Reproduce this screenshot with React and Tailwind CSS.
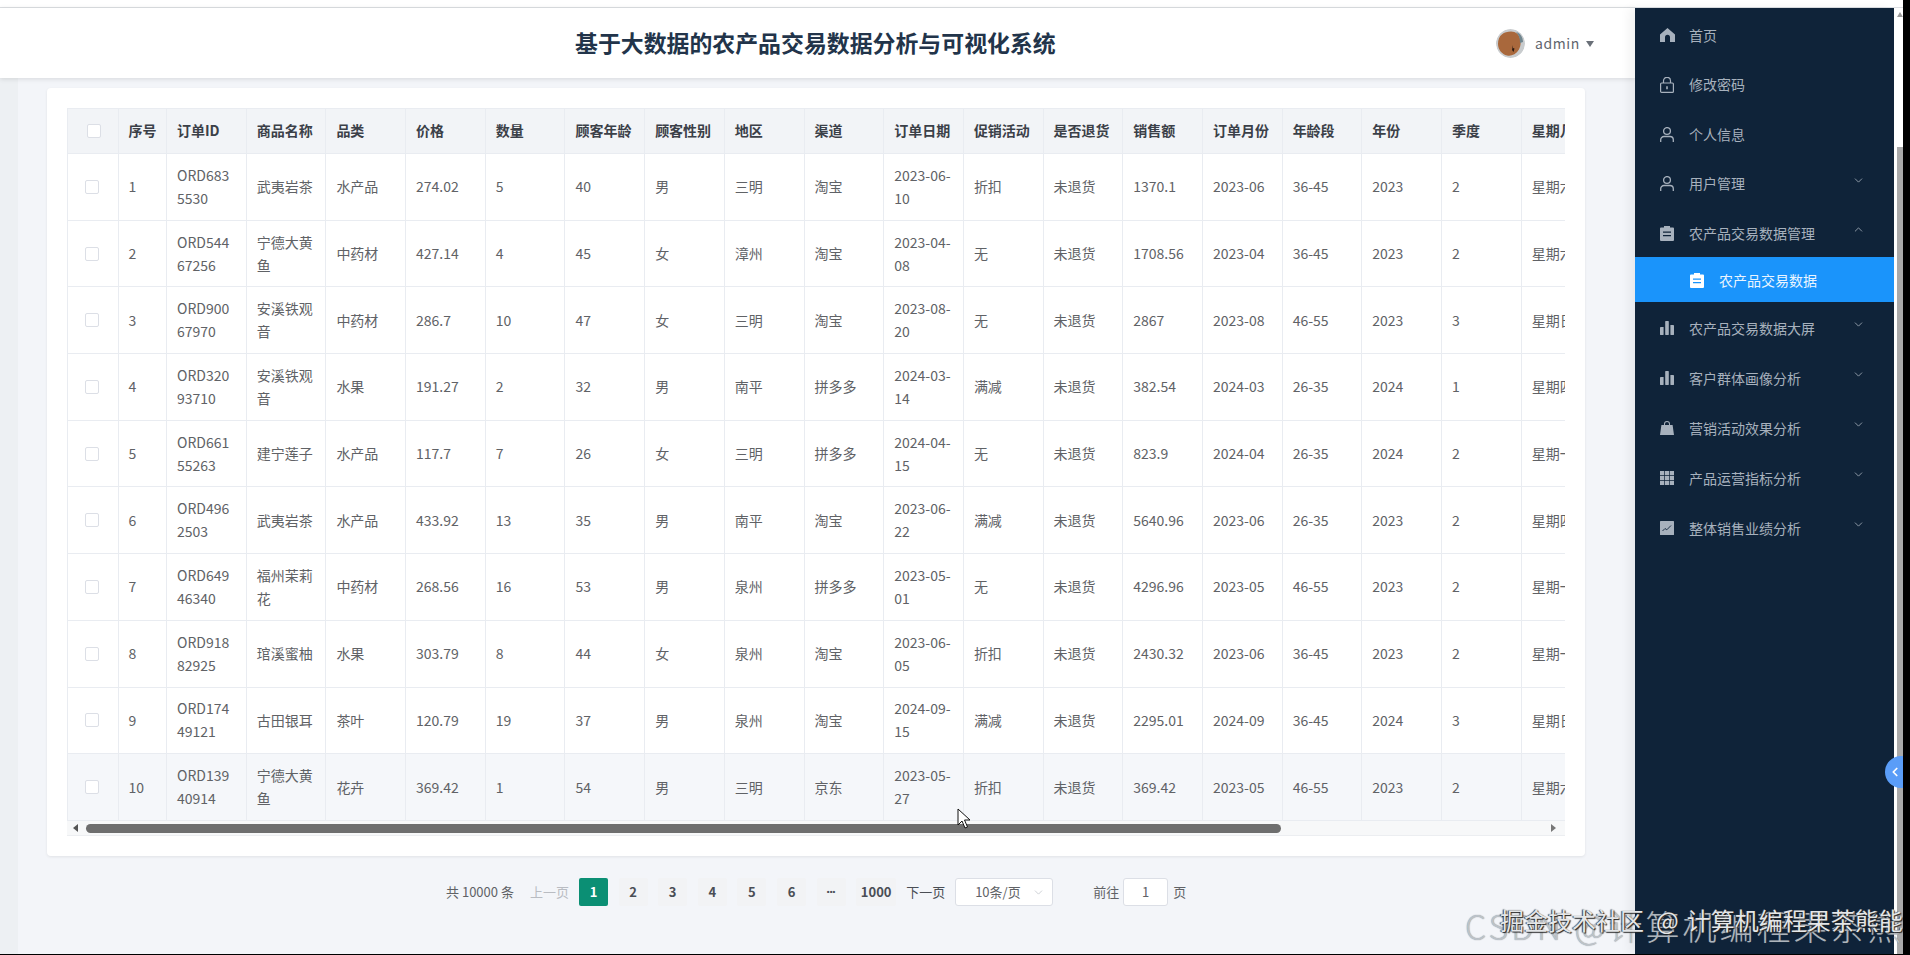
import React from 'react';
import { ChevronDown, ChevronUp, ChevronLeft } from 'lucide-react';

const columns = ['序号', '订单ID', '商品名称', '品类', '价格', '数量', '顾客年龄', '顾客性别', '地区', '渠道', '订单日期', '促销活动', '是否退货', '销售额', '订单月份', '年龄段', '年份', '季度', '星期几'];

const rows = [
  ['1', 'ORD6835530', '武夷岩茶', '水产品', '274.02', '5', '40', '男', '三明', '淘宝', '2023-06-10', '折扣', '未退货', '1370.1', '2023-06', '36-45', '2023', '2', '星期六'],
  ['2', 'ORD54467256', '宁德大黄鱼', '中药材', '427.14', '4', '45', '女', '漳州', '淘宝', '2023-04-08', '无', '未退货', '1708.56', '2023-04', '36-45', '2023', '2', '星期六'],
  ['3', 'ORD90067970', '安溪铁观音', '中药材', '286.7', '10', '47', '女', '三明', '淘宝', '2023-08-20', '无', '未退货', '2867', '2023-08', '46-55', '2023', '3', '星期日'],
  ['4', 'ORD32093710', '安溪铁观音', '水果', '191.27', '2', '32', '男', '南平', '拼多多', '2024-03-14', '满减', '未退货', '382.54', '2024-03', '26-35', '2024', '1', '星期四'],
  ['5', 'ORD66155263', '建宁莲子', '水产品', '117.7', '7', '26', '女', '三明', '拼多多', '2024-04-15', '无', '未退货', '823.9', '2024-04', '26-35', '2024', '2', '星期一'],
  ['6', 'ORD4962503', '武夷岩茶', '水产品', '433.92', '13', '35', '男', '南平', '淘宝', '2023-06-22', '满减', '未退货', '5640.96', '2023-06', '26-35', '2023', '2', '星期四'],
  ['7', 'ORD64946340', '福州茉莉花', '中药材', '268.56', '16', '53', '男', '泉州', '拼多多', '2023-05-01', '无', '未退货', '4296.96', '2023-05', '46-55', '2023', '2', '星期一'],
  ['8', 'ORD91882925', '琯溪蜜柚', '水果', '303.79', '8', '44', '女', '泉州', '淘宝', '2023-06-05', '折扣', '未退货', '2430.32', '2023-06', '36-45', '2023', '2', '星期一'],
  ['9', 'ORD17449121', '古田银耳', '茶叶', '120.79', '19', '37', '男', '泉州', '淘宝', '2024-09-15', '满减', '未退货', '2295.01', '2024-09', '36-45', '2024', '3', '星期日'],
  ['10', 'ORD13940914', '宁德大黄鱼', '花卉', '369.42', '1', '54', '男', '三明', '京东', '2023-05-27', '折扣', '未退货', '369.42', '2023-05', '46-55', '2023', '2', '星期六'],
];

const HomeIcon = () => (
  <svg width="15" height="14" viewBox="0 0 15 14" fill="currentColor">
    <path d="M7.5 0 15 6.6V14H10V9.2a2.5 2.5 0 0 0-5 0V14H0V6.6Z" />
  </svg>
);

const LockIcon = () => (
  <svg width="14" height="16" viewBox="0 0 14 16" fill="none" stroke="currentColor" strokeWidth="1.2">
    <rect x="0.6" y="6" width="12.8" height="9.4" rx="1" />
    <path d="M3.5 6V3.8a3.5 3.5 0 0 1 7 0V6" />
    <path d="M7 9.2v3" strokeWidth="1.6" />
  </svg>
);

const UserIcon = () => (
  <svg width="14" height="15" viewBox="0 0 14 15" fill="none" stroke="currentColor" strokeWidth="1.3">
    <circle cx="7" cy="4" r="3.4" />
    <path d="M0.7 15v-2.2A3.3 3.3 0 0 1 4 9.5h6a3.3 3.3 0 0 1 3.3 3.3V15" />
  </svg>
);

const ClipIcon = () => (
  <svg width="14" height="15" viewBox="0 0 14 15" fill="currentColor">
    <path fillRule="evenodd" d="M4 0h6v1.500h3a1 1 0 0 1 1 1V14a1 1 0 0 1-1 1H1a1 1 0 0 1-1-1V2.500a1 1 0 0 1 1-1h3Zm-1 5.500v1.200h8V5.500Zm0 3.600v1.200h8V9.100Z" />
  </svg>
);

const BarsIcon = () => (
  <svg width="14" height="14" viewBox="0 0 14 14" fill="currentColor">
    <rect x="0" y="6" width="3.6" height="8" rx="0.4" />
    <rect x="5.2" y="0" width="3.6" height="14" rx="0.4" />
    <rect x="10.4" y="4" width="3.6" height="10" rx="0.4" />
  </svg>
);

const BagIcon = () => (
  <svg width="14" height="14" viewBox="0 0 14 14" fill="currentColor">
    <path fillRule="evenodd" d="M4 4V3a3 3 0 0 1 6 0v1h2.600L14 14H0L1.400 4Zm1 0h4V3a2 2 0 0 0-4 0Z" />
  </svg>
);

const GridIcon = () => (
  <svg width="14" height="14" viewBox="0 0 14 14" fill="currentColor">
    <path d="M0 0h4.200v4.200H0ZM4.900 0h4.200v4.200H4.900ZM9.800 0H14v4.200H9.800ZM0 4.900h4.200v4.200H0ZM4.900 4.900h4.200v4.200H4.900ZM9.800 4.900H14v4.200H9.800ZM0 9.800h4.200V14H0ZM4.900 9.800h4.200V14H4.900ZM9.800 9.800H14V14H9.800Z" />
  </svg>
);

const TrendIcon = () => (
  <svg width="14" height="14" viewBox="0 0 14 14">
    <rect width="14" height="14" rx="0.6" fill="currentColor" />
    <path d="M2.500 10 5 7.500l1.800 1.300L11 4.500" fill="none" stroke="#0f2339" strokeWidth="0.9" />
  </svg>
);

const menuTop = [
  { label: '首页', icon: <HomeIcon /> },
  { label: '修改密码', icon: <LockIcon /> },
  { label: '个人信息', icon: <UserIcon /> },
  { label: '用户管理', icon: <UserIcon />, arrow: 'down' },
  { label: '农产品交易数据管理', icon: <ClipIcon />, arrow: 'up' },
];

const menuBottom = [
  { label: '农产品交易数据大屏', icon: <BarsIcon />, arrow: 'down' },
  { label: '客户群体画像分析', icon: <BarsIcon />, arrow: 'down' },
  { label: '营销活动效果分析', icon: <BagIcon />, arrow: 'down' },
  { label: '产品运营指标分析', icon: <GridIcon />, arrow: 'down' },
  { label: '整体销售业绩分析', icon: <TrendIcon />, arrow: 'down' },
];

function MenuItem({ item, tall }) {
  return (
    <div className={`flex items-center pl-[25px] pr-[29px] text-[14px] text-[#a7b1bd] ${tall ? 'h-[50px]' : 'h-[49.5px]'}`}>
      <span className="flex w-[29px] shrink-0 items-center">{item.icon}</span>
      <span>{item.label}</span>
      {item.arrow === 'down' && <ChevronDown size={13} strokeWidth={1.5} className="mb-[7px] ml-auto" />}
      {item.arrow === 'up' && <ChevronUp size={13} strokeWidth={1.5} className="mb-[7px] ml-auto" />}
    </div>
  );
}

function Sidebar() {
  return (
    <aside className="z-10 w-[259px] shrink-0 bg-[#0f2339] pt-[2.500px] shadow-[-6px_0_10px_rgba(0,0,0,0.05)]">
      {menuTop.map((item) => (
        <MenuItem key={item.label} item={item} />
      ))}
      <div className="relative -mt-[1px] mb-[1px] flex h-[45px] items-center bg-[#1a94fb] pl-[55px] pt-[1px] text-[14px] text-[#e9f4ff]">
        <span className="flex w-[29px] items-center text-white"><ClipIcon /></span>
        <span>农产品交易数据</span>
      </div>
      {menuBottom.map((item) => (
        <MenuItem key={item.label} item={item} tall />
      ))}
    </aside>
  );
}

function Header() {
  return (
    <header className="relative z-10 flex h-[70px] shrink-0 items-center bg-white shadow-[0_1px_5px_rgba(0,0,0,0.12)]">
      <h1 className="mb-[2px] ml-[575px] w-[490px] whitespace-nowrap text-[22.900px] font-bold text-[#22344a]">基于大数据的农产品交易数据分析与可视化系统</h1>
      <div className="ml-[431px] flex items-center">
        <svg width="29" height="29" viewBox="0 0 29 29" className="rounded-full">
          <circle cx="14.500" cy="14.500" r="14.500" fill="#c9ccce" />
          <path d="M2 15C2 6 8 2.500 15 2.500c5 0 8 3 9 7 1 3 1 7-1 11-3 5-8 7-12 6-5-1-9-6-9-11.500Z" fill="#a9683c" />
          <path d="M20 3c4 1 7 5 7 10l-3 1c0-5-1-8-4-11Z" fill="#70868f" />
          <path d="M17 16l-1 5 1.500 2 1-3.500-1.500-.500Z" fill="#2b1a12" />
        </svg>
        <span className="ml-[10px] text-[14px] tracking-[0.6px] text-[#5f656d]">admin</span>
        <span className="ml-[6px] mt-[1px] h-0 w-0 border-x-[4.500px] border-t-[6px] border-x-transparent border-t-[#6a7078]" />
      </div>
    </header>
  );
}

function CheckBox({ head }) {
  return <span className={`block h-[14px] w-[14px] rounded-[2px] border border-[#dcdfe6] bg-white ${head ? 'ml-[19px]' : 'ml-[17px]'}`} />;
}

function DataTable() {
  return (
    <div className="w-[1498px] overflow-hidden">
      <table className="w-[1533.600px] table-fixed border-collapse text-[14px] text-[#606266]">
        <colgroup>
          <col className="w-[50.500px]" />
          <col className="w-[48.500px]" />
          {columns.slice(1).map((c) => (
            <col key={c} className="w-[79.700px]" />
          ))}
        </colgroup>
        <thead>
          <tr className="h-[45px] bg-[#f2f4f7]">
            <th className="border border-[#e9ecf1] p-0"><CheckBox head /></th>
            {columns.map((c) => (
              <th key={c} className="overflow-hidden whitespace-nowrap border border-[#e9ecf1] px-[10px] pb-[2px] text-left font-bold text-[#3b4048]">{c}</th>
            ))}
          </tr>
        </thead>
        <tbody>
          {rows.map((row, i) => (
            <tr key={row[0]} className={`h-[66.700px] ${i === 9 ? 'bg-[#f5f7fa]' : 'bg-white'}`}>
              <td className="border border-[#e9ecf1] p-0"><CheckBox /></td>
              {row.map((cell, j) => (
                <td key={j} className="overflow-hidden border border-[#e9ecf1] px-[10px] leading-[23px] break-all">
                  <span className={j === 18 ? 'whitespace-nowrap' : ''}>{cell}</span>
                </td>
              ))}
            </tr>
          ))}
        </tbody>
      </table>
      <div className="flex h-[15px] items-center bg-[#f7f8f9] shadow-[inset_0_-1px_0_#eceef1]">
        <span className="ml-[6px] h-0 w-0 border-y-[4px] border-r-[5px] border-y-transparent border-r-[#555]" />
        <span className="ml-[8px] h-[9px] w-[1195px] rounded-full bg-[#6e6e6e]" />
        <span className="ml-[270px] h-0 w-0 border-y-[4px] border-l-[5px] border-y-transparent border-l-[#777]" />
      </div>
    </div>
  );
}

function Pagination() {
  const pages = ['1', '2', '3', '4', '5', '6', '•••'];
  return (
    <div className="ml-[399px] mt-[22px] flex h-[28px] items-center text-[13px] text-[#606266]">
      <span className="w-[68px] whitespace-nowrap">共 10000 条</span>
      <span className="ml-[16px] w-[39px] text-[#b9bcc2]">上一页</span>
      <div className="ml-[10px] flex">
        {pages.map((p, i) => (
          <span
            key={p}
            className={`mr-[10.600px] flex h-[28px] w-[29px] items-center justify-center rounded-[2px] font-bold ${i === 0 ? 'bg-[#0b8f74] text-white' : 'bg-[#f2f3f5] text-[#4a4e55]'} ${i === 6 ? "font-['Liberation_Sans'] text-[8px]" : ''}`}
          >
            {p}
          </span>
        ))}
      </div>
      <span className="flex h-[28px] w-[40px] items-center justify-center rounded-[2px] bg-[#f2f3f5] font-bold text-[#4a4e55]">1000</span>
      <span className="ml-[10px] w-[39px] text-[#4a4e55]">下一页</span>
      <div className="ml-[10px] flex h-[28px] w-[98px] items-center rounded-[3px] border border-[#dcdfe6] bg-white pl-[19px] pr-[7px]">
        <span>10条/页</span>
        <ChevronDown size={13} strokeWidth={1.2} className="ml-auto text-[#b4b8bf]" />
      </div>
      <span className="ml-[40px] w-[26px]">前往</span>
      <div className="ml-[4px] flex h-[28px] w-[45px] items-center justify-center rounded-[3px] border border-[#dcdfe6] bg-white">1</div>
      <span className="ml-[5px]">页</span>
    </div>
  );
}

function Watermark() {
  return (
    <div className="pointer-events-none absolute left-[1460px] top-[895px] z-20 h-[59px] w-[443px] overflow-hidden">
      <div className="absolute left-[5px] top-[8px] whitespace-nowrap text-[34px] font-light leading-[46px] tracking-[3px] text-[#ccd1d6]/80 [text-shadow:0_0_1px_rgba(90,100,110,0.8)]">CSDN @计算机编程果茶熊</div>
      <div className="absolute left-[40px] top-[9px] flex whitespace-nowrap text-[24px] leading-[32px] text-[#e4e6e8] [text-shadow:1px_1px_1px_#222,-1px_0_1px_#333]">
        <span>掘金技术社区</span>
        <span className="ml-[12px]">@</span>
        <span className="ml-[8px]">计算机编程果茶熊能</span>
      </div>
    </div>
  );
}

export default function App() {
  return (
    <div className="relative h-[955px] w-[1910px] overflow-hidden bg-black font-['Noto_Sans_CJK_SC','Noto_Sans',sans-serif]">
      <div className="flex h-[954px] w-[1903px] flex-col bg-white">
        <div className="h-[8px] shrink-0 border-b border-[#dcdfe3] bg-white" />
        <div className="flex min-h-0 flex-1">
          <div className="flex min-w-0 flex-1 flex-col bg-[#edf0f3]">
            <Header />
            <div className="ml-[18px] h-[854px] flex-1 bg-[#f3f5f9] pb-[22px] pl-[29px] pt-[10px]">
              <div className="h-[768px] w-[1538px] rounded-[4px] bg-white p-[20px] shadow-[0_1px_3px_rgba(0,0,0,0.08)]">
                <DataTable />
              </div>
              <Pagination />
            </div>
          </div>
          <Sidebar />
          <div className="flex w-[9px] shrink-0 flex-col bg-white pl-[3px]">
            <span className="mt-[4px] h-0 w-0 border-x-[3px] border-b-[5px] border-x-transparent border-b-[#9b9b9b]" />
            <span className="mt-[130px] w-[6px] flex-1 bg-[#a9a9a9]" />
          </div>
        </div>
      </div>
      <div className="absolute left-[1885px] top-[756px] z-20 flex h-[32px] w-[18px] items-center overflow-hidden rounded-l-full bg-[#5a9df8] pl-[3px] text-white">
        <ChevronLeft size={14} strokeWidth={3} />
      </div>
      <svg width="14" height="22" viewBox="0 0 14 22" className="absolute left-[957px] top-[808px] z-20">
        <path d="M1 1v16l4-4 3 7 2.500-1-3-7h5.500Z" fill="#fff" stroke="#111" strokeWidth="1" />
      </svg>
      <Watermark />
    </div>
  );
}
